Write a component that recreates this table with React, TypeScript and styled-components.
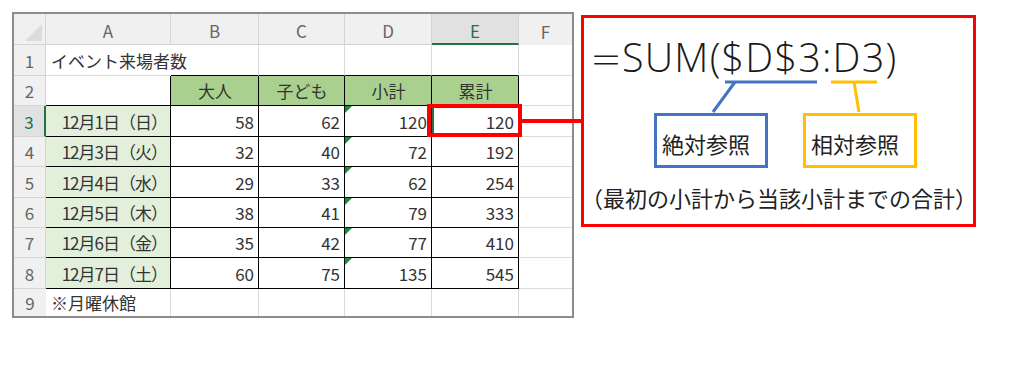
import React from "react";
import styled, { createGlobalStyle } from "styled-components";

const GlobalStyle = createGlobalStyle`
  html, body { margin: 0; padding: 0; background: #ffffff; }
  body { font-family: "Noto Sans CJK JP", "Noto Sans", sans-serif; }
`;

const Page = styled.div`
  display: flex;
  align-items: flex-start;
  padding: 12px 0 0 12px;
  width: 1024px;
  height: 384px;
  box-sizing: border-box;
`;

const Sheet = styled.div`
  display: grid;
  grid-template-columns: 32px 125px 88px 86px 87px 87px 53px;
  grid-template-rows: 31px 31px 30px 31px 30px 31px 30px 30px 31px 27px;
  border: 2px solid #8c8c8c;
  font-family: "Noto Sans CJK JP", sans-serif;
  font-size: 17px;
  color: #333333;
`;

const HeaderCell = styled.div<{ $sel?: boolean; $last?: boolean; $row?: boolean }>`
  box-sizing: border-box;
  display: flex;
  align-items: center;
  justify-content: center;
  padding-top: ${(p) => (p.$row ? "0" : "3px")};
  background: ${(p) => (p.$sel ? "#e1e1e1" : "#f0f0f0")};
  color: ${(p) => (p.$sel ? "#217346" : "#666666")};
  border-right: ${(p) =>
    p.$last ? "none" : p.$row && p.$sel ? "2px solid #217346" : "1px solid #d4d4d4"};
  border-bottom: ${(p) =>
    p.$sel && !p.$row ? "2px solid #217346" : p.$last ? "none" : "1px solid #d4d4d4"};
`;

const Corner = styled.div`
  box-sizing: border-box;
  position: relative;
  background: #f0f0f0;
  border-right: 1px solid #d4d4d4;
  border-bottom: 1px solid #d4d4d4;
  &::after {
    content: "";
    position: absolute;
    right: 3px;
    bottom: 3px;
    width: 0;
    height: 0;
    border-left: 17px solid transparent;
    border-bottom: 17px solid #dcdcdc;
  }
`;

const Cell = styled.div<{
  $rb: string;
  $bb: string;
  $bg?: string;
  $align?: "left" | "right" | "center";
  $sel?: boolean;
  $tight?: boolean;
}>`
  position: relative;
  box-sizing: border-box;
  display: flex;
  align-items: center;
  justify-content: ${(p) =>
    p.$align === "right" ? "flex-end" : p.$align === "center" ? "center" : "flex-start"};
  padding: 0 ${(p) => (p.$tight ? "3px" : "4px")} 0 5px;
  white-space: nowrap;
  overflow: visible;
  letter-spacing: ${(p) => (p.$tight ? "-1px" : "normal")};
  background: ${(p) => p.$bg ?? "transparent"};
  border-right: ${(p) => (p.$rb === "none" ? "none" : `1px solid ${p.$rb}`)};
  border-bottom: ${(p) => (p.$bb === "none" ? "none" : `1px solid ${p.$bb}`)};
  box-shadow: ${(p) => (p.$sel ? "inset 2px 0 0 #217346" : "none")};
`;

const ErrorMark = styled.span`
  position: absolute;
  top: 0;
  left: 0;
  width: 0;
  height: 0;
  border-top: 7px solid #1b8a3a;
  border-right: 7px solid transparent;
`;

const Highlight = styled.span`
  position: absolute;
  left: -5px;
  top: -2px;
  right: -4px;
  bottom: -1px;
  border: 4px solid #ff0000;
  z-index: 2;
`;

const Connector = styled.span`
  position: absolute;
  left: calc(100% + 4px);
  top: 13px;
  width: 60px;
  height: 4px;
  background: #ff0000;
  z-index: 2;
`;

const Callout = styled.div`
  position: relative;
  box-sizing: border-box;
  margin: 3px 0 0 7px;
  width: 395px;
  height: 212px;
  border: 3px solid #ff0000;
  display: flex;
  flex-direction: column;
  align-items: flex-start;
  font-family: "Noto Sans CJK JP", sans-serif;
  color: #222222;
`;

const Formula = styled.div`
  margin: 20px 0 0 6px;
  font-family: "Open Sans", "Noto Sans CJK JP", sans-serif;
  font-weight: 300;
  font-size: 39.5px;
  letter-spacing: 1.2px;
  line-height: 1;
  white-space: nowrap;
  color: #1a1a1a;
`;

const Equals = styled.span`
  font-family: "Noto Sans CJK JP", sans-serif;
  font-weight: 300;
  font-size: 32px;
  letter-spacing: 0;
`;

const Labels = styled.div`
  display: flex;
  gap: 35px;
  margin: 35px 0 0 70px;
`;

const LabelBox = styled.div<{ $color: string }>`
  box-sizing: border-box;
  width: 114px;
  height: 55px;
  border: 3px solid ${(p) => p.$color};
  display: flex;
  align-items: center;
  padding: 5px 0 0 5px;
  font-size: 22px;
  line-height: 1;
`;

const Note = styled.div`
  margin: 18px 0 0 -3px;
  font-size: 22px;
  line-height: 1;
  white-space: nowrap;
`;

const Lines = styled.svg`
  position: absolute;
  left: -3px;
  top: -3px;
  width: 395px;
  height: 212px;
  pointer-events: none;
`;

const BLACK = "#000000";
const GRID = "#dadada";
const GREEN_HEAD = "#a9d08e";
const GREEN_DATE = "#e2efda";

const cols = ["A", "B", "C", "D", "E", "F"];

const data: [string, number, number, number, number][] = [
  ["12月1日（日）", 58, 62, 120, 120],
  ["12月3日（火）", 32, 40, 72, 192],
  ["12月4日（水）", 29, 33, 62, 254],
  ["12月5日（木）", 38, 41, 79, 333],
  ["12月6日（金）", 35, 42, 77, 410],
  ["12月7日（土）", 60, 75, 135, 545],
];

export default function App() {
  const headers = ["大人", "子ども", "小計", "累計"];
  return (
    <>
      <GlobalStyle />
      <Page>
        <Sheet>
          <Corner />
          {cols.map((c, i) => (
            <HeaderCell key={c} $sel={c === "E"} $last={i === cols.length - 1}>
              {c}
            </HeaderCell>
          ))}

          {/* Row 1 */}
          <HeaderCell $row>1</HeaderCell>
          <Cell $rb="transparent" $bb={GRID}>イベント来場者数</Cell>
          {[0, 1, 2, 3].map((i) => (
            <Cell key={i} $rb={GRID} $bb={BLACK} />
          ))}
          <Cell $rb="none" $bb={GRID} />

          {/* Row 2 */}
          <HeaderCell $row>2</HeaderCell>
          <Cell $rb={BLACK} $bb={BLACK} />
          {headers.map((h) => (
            <Cell key={h} $rb={BLACK} $bb={BLACK} $bg={GREEN_HEAD} $align="center">
              {h}
            </Cell>
          ))}
          <Cell $rb="none" $bb={GRID} />

          {/* Rows 3-8 */}
          {data.map((r, ri) => (
            <React.Fragment key={ri}>
              <HeaderCell $row $sel={ri === 0}>
                {ri + 3}
              </HeaderCell>
              <Cell $rb={BLACK} $bb={BLACK} $bg={GREEN_DATE} $align="right" $tight>
                {r[0]}
              </Cell>
              <Cell $rb={BLACK} $bb={BLACK} $align="right">
                {r[1]}
              </Cell>
              <Cell $rb={BLACK} $bb={BLACK} $align="right">
                {r[2]}
              </Cell>
              <Cell $rb={BLACK} $bb={BLACK} $align="right">
                <ErrorMark />
                {r[3]}
              </Cell>
              <Cell $rb={BLACK} $bb={BLACK} $align="right" $sel={ri === 0}>
                {r[4]}
                {ri === 0 && (
                  <>
                    <Highlight />
                    <Connector />
                  </>
                )}
              </Cell>
              <Cell $rb="none" $bb={GRID} />
            </React.Fragment>
          ))}

          {/* Row 9 */}
          <HeaderCell $row $last>
            9
          </HeaderCell>
          <Cell $rb={GRID} $bb="none">※月曜休館</Cell>
          {[0, 1, 2, 3].map((i) => (
            <Cell key={i} $rb={GRID} $bb="none" />
          ))}
          <Cell $rb="none" $bb="none" />
        </Sheet>

        <Callout>
          <Formula>
            <Equals>＝</Equals>SUM($D$3:D3)
          </Formula>
          <Labels>
            <LabelBox $color="#4472c4">絶対参照</LabelBox>
            <LabelBox $color="#ffc000">相対参照</LabelBox>
          </Labels>
          <Note>（最初の小計から当該小計までの合計）</Note>
          <Lines viewBox="0 0 395 212">
            <line x1="144" y1="67" x2="236" y2="67" stroke="#4472c4" strokeWidth="3" />
            <line x1="154" y1="67" x2="132" y2="97" stroke="#4472c4" strokeWidth="3" />
            <line x1="250" y1="67" x2="296" y2="67" stroke="#ffc000" strokeWidth="3" />
            <line x1="273" y1="67" x2="278" y2="97" stroke="#ffc000" strokeWidth="3" />
          </Lines>
        </Callout>
      </Page>
    </>
  );
}
